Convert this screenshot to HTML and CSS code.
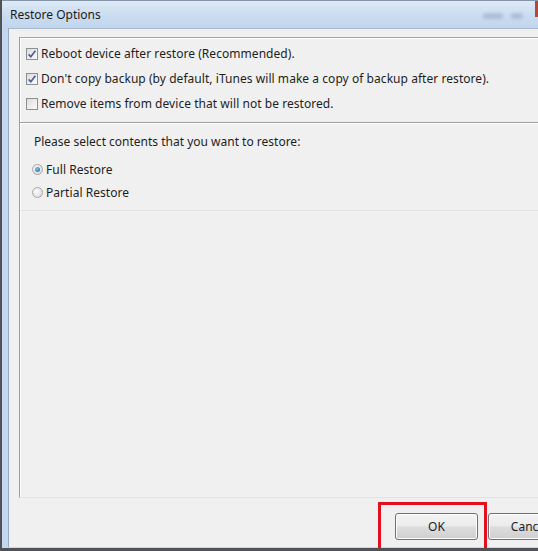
FILE: index.html
```html
<!DOCTYPE html>
<html>
<head>
<meta charset="utf-8">
<title>Restore Options</title>
<link rel="stylesheet" href="styles.css">
</head>
<body>
<div class="window">
  <div class="titlebar">
    <span class="title">Restore Options</span>
    <span class="controls">
      <span class="blur blur-a"></span>
      <span class="blur blur-b"></span>
      <span class="close"></span>
    </span>
  </div>
  <div class="frame">
    <div class="client">
      <div class="panel">
        <div class="options">
          <label class="row">
            <span class="check on"><svg viewBox="0 0 12 12" width="12" height="12"><path d="M2.6 6.4 L4.8 8.8 L9.4 2.8" fill="none" stroke="#4a5a9c" stroke-width="1.6"/></svg></span>
            <span class="label">Reboot device after restore (Recommended).</span>
          </label>
          <label class="row">
            <span class="check on"><svg viewBox="0 0 12 12" width="12" height="12"><path d="M2.6 6.4 L4.8 8.8 L9.4 2.8" fill="none" stroke="#4a5a9c" stroke-width="1.6"/></svg></span>
            <span class="label">Don't copy backup (by default, iTunes will make a copy of backup after restore).</span>
          </label>
          <label class="row">
            <span class="check"></span>
            <span class="label">Remove items from device that will not be restored.</span>
          </label>
        </div>
        <div class="group">
          <div class="prompt">Please select contents that you want to restore:</div>
          <label class="radio-row first">
            <span class="radio on"><span class="dot"></span></span>
            <span class="label">Full Restore</span>
          </label>
          <label class="radio-row">
            <span class="radio"></span>
            <span class="label">Partial Restore</span>
          </label>
        </div>
      </div>
      <div class="footer">
        <button class="btn">OK</button>
        <button class="btn">Cancel</button>
      </div>
    </div>
  </div>
  <div class="highlight"></div>
</div>
</body>
</html>
```

FILE: styles.css
```css
html, body {
  margin: 0;
  padding: 0;
  width: 538px;
  height: 551px;
  overflow: hidden;
  background: #4f5257;
}

.window {
  position: relative;
  margin-left: 2px;
  width: 536px;
  height: 548px;
  overflow: hidden;
  background: #c3d8ef;
  border-top: 1px solid #8596ab;
  box-sizing: border-box;
  font-family: "Noto Sans", "DejaVu Sans", sans-serif;
  font-size: 12px;
  color: #1e1e1e;
}

.titlebar {
  height: 27px;
  display: flex;
  align-items: center;
  justify-content: space-between;
  padding-left: 8px;
  background: linear-gradient(#dde9f6, #c8dbef 60%, #c1d6ee);
}

.title {
  font-size: 12px;
  color: #1b1b1b;
  margin-top: -1px;
}

.controls {
  display: flex;
  align-items: flex-start;
  align-self: stretch;
  gap: 8px;
}

.blur {
  display: block;
  height: 6px;
  margin-top: 12px;
  border-radius: 3px;
  background: rgba(120, 140, 165, 0.35);
  filter: blur(1.5px);
}

.blur-a { width: 20px; }
.blur-b { width: 12px; }

.close {
  display: block;
  width: 3px;
  height: 16px;
  background: #b8463c;
  margin-left: 4px;
}

.frame {
  padding-left: 6px;
  height: 520px;
}

.client {
  height: 519px;
  background: #f0f0f0;
  border-top: 1px solid #a9b8c8;
  border-left: 1px solid #98a9bb;
  padding: 8px 0 0 10px;
  box-sizing: border-box;
  display: flex;
  flex-direction: column;
}

.panel {
  height: 461px;
  box-sizing: border-box;
  border-top: 1px solid #a5a5a5;
  border-left: 1px solid #9c9c9c;
  box-shadow: inset 1px 1px 0 #ffffff;
  border-bottom: 1px solid #e2e2e2;
  padding-top: 3px;
  display: flex;
  flex-direction: column;
}

.options {
  padding-left: 6px;
  padding-bottom: 6px;
}

.row {
  display: flex;
  align-items: center;
  height: 25px;
  gap: 3px;
}

.label {
  letter-spacing: 0.05px;
}

.check {
  width: 12px;
  height: 12px;
  box-sizing: border-box;
  border: 1px solid #8e8f8f;
  background: linear-gradient(135deg, #dcdcdc, #fbfbfb);
  display: flex;
  align-items: center;
  justify-content: center;
  flex: none;
}

.check svg {
  display: block;
  margin: -1px;
}

.group {
  border-top: 1px solid #a0a0a0;
  box-shadow: inset 0 1px 0 #ffffff;
  border-bottom: 1px solid #e2e2e2;
  padding: 9px 0 6px 12px;
}

.prompt {
  height: 20px;
  line-height: 20px;
  padding-left: 2px;
}

.radio-row {
  display: flex;
  align-items: center;
  height: 23px;
  gap: 3px;
}

.radio-row.first {
  margin-top: 6px;
}

.radio {
  width: 11px;
  height: 11px;
  box-sizing: border-box;
  border-radius: 50%;
  border: 1px solid #a7a7a7;
  background: radial-gradient(circle at 40% 40%, #fdfdfd, #d4d4d4);
  display: flex;
  align-items: center;
  justify-content: center;
  flex: none;
}

.dot {
  width: 5px;
  height: 5px;
  border-radius: 50%;
  background: radial-gradient(circle at 40% 35%, #7cc6ee, #1a5f98);
}

.footer {
  display: flex;
  gap: 10px;
  padding: 15px 0 0 376px;
}

.btn {
  flex: none;
  width: 83px;
  height: 27px;
  border: 1px solid #707070;
  border-radius: 3px;
  background: linear-gradient(#f3f3f3, #ebebeb 48%, #dddddd 52%, #cfcfcf);
  box-shadow: inset 0 0 0 1px #fcfcfc;
  font-family: "Noto Sans", "DejaVu Sans", sans-serif;
  font-size: 12px;
  color: #1e1e1e;
  padding: 0;
}

.highlight {
  position: absolute;
  left: 376px;
  top: 501px;
  width: 109px;
  height: 60px;
  box-sizing: border-box;
  border: 3px solid #e3101e;
}
```
